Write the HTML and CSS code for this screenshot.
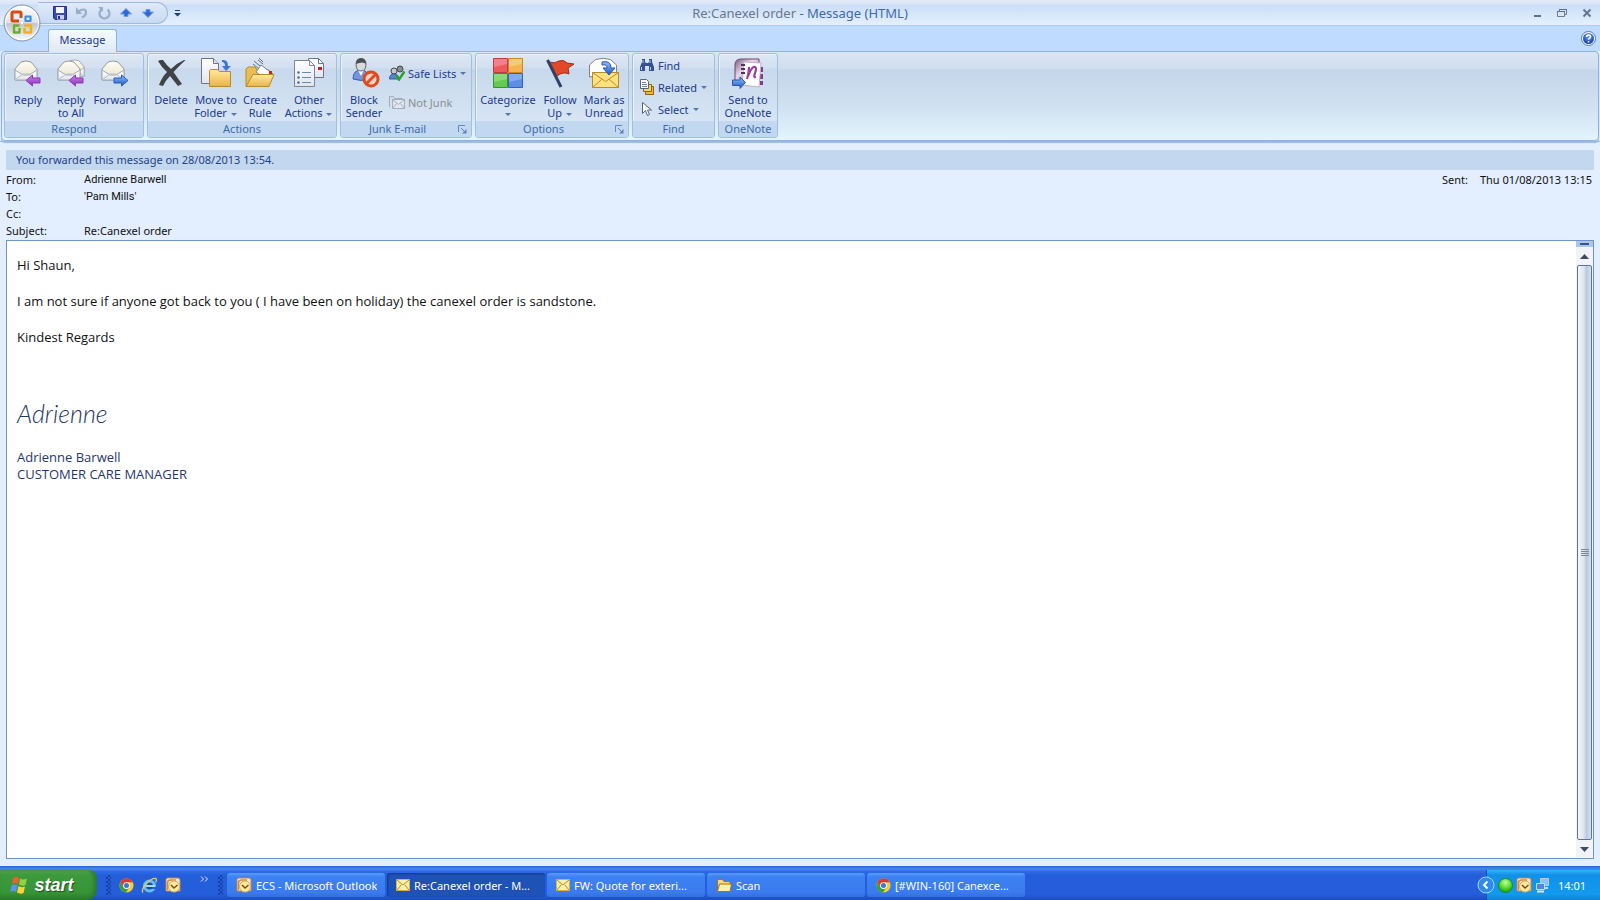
FILE: index.html
```html
<!DOCTYPE html>
<html lang="en">
<head>
  <meta charset="UTF-8">
  <meta name="viewport" content="width=device-width, initial-scale=1.0">
  <title>Re:Canexel order - Message (HTML)</title>
  <link rel="stylesheet" href="styles.css">
</head>
<body>
  <!-- shared icons -->
  <svg class="defs" width="0" height="0" aria-hidden="true">
    <defs>
      <linearGradient id="paper" x1="0" y1="0" x2="0" y2="1"><stop offset="0" stop-color="#fff"/><stop offset="1" stop-color="#dfe5ee"/></linearGradient>
      <linearGradient id="flap" x1="0" y1="0" x2="0" y2="1"><stop offset="0" stop-color="#fffef8"/><stop offset="1" stop-color="#e6dfc8"/></linearGradient>
      <linearGradient id="gold" x1="0" y1="0" x2="0" y2="1"><stop offset="0" stop-color="#ffe9a4"/><stop offset="1" stop-color="#e9b544"/></linearGradient>
      <linearGradient id="blue" x1="0" y1="0" x2="0" y2="1"><stop offset="0" stop-color="#8fc0fa"/><stop offset="1" stop-color="#1e56c8"/></linearGradient>
      <linearGradient id="purple" x1="0" y1="0" x2="0" y2="1"><stop offset="0" stop-color="#cf86e8"/><stop offset="1" stop-color="#8a2bb8"/></linearGradient>
      <linearGradient id="orb" x1="0" y1="0" x2="0" y2="1"><stop offset="0" stop-color="#fff"/><stop offset=".48" stop-color="#dfe3ea"/><stop offset=".52" stop-color="#bfc6d2"/><stop offset="1" stop-color="#fbfcff"/></linearGradient>
      <linearGradient id="onenote" x1="0" y1="0" x2="1" y2="1"><stop offset="0" stop-color="#7a5a80"/><stop offset=".4" stop-color="#e8d8ea"/><stop offset="1" stop-color="#7d4a86"/></linearGradient>
      <radialGradient id="green" cx=".5" cy=".3" r=".7"><stop offset="0" stop-color="#c8ff9a"/><stop offset=".6" stop-color="#4cd62a"/><stop offset="1" stop-color="#1f9a14"/></radialGradient>
      <radialGradient id="help" cx=".5" cy=".3" r=".7"><stop offset="0" stop-color="#6ea4f4"/><stop offset="1" stop-color="#1238a4"/></radialGradient>
    </defs>
    <symbol id="envelope" viewBox="0 0 24 24">
      <path d="M1 9 7 2q5-2 10 0l6 7v11H1z" fill="url(#flap)" stroke="#9b9b96"/>
      <path d="M1 10l8 5h6l8-5v10H1z" fill="url(#paper)" stroke="#a3aab3"/>
      <path d="M1 20l8-6h6l8 6" fill="none" stroke="#b9bfc8"/>
    </symbol>
    <symbol id="arrow" viewBox="0 0 8 5"><path d="M1 1h6L4 4z" fill="#5675a8"/></symbol>
    <symbol id="outlook" viewBox="0 0 16 16">
      <path d="M1 2.500Q1 1 3 1h10q2 0 2 2v11H1z" fill="#fbe9cf" stroke="#b98352"/>
      <path d="M2.500 13V6q0-3 3-3H11" fill="none" stroke="#d58a4a" stroke-width="1.500"/>
      <circle cx="9" cy="9.500" r="5.500" fill="#ffeaa6" stroke="#e0ac48"/>
      <path d="M6 8l3 3 3.500-3" fill="none" stroke="#7a4a10" stroke-width="1.500"/>
    </symbol>
    <symbol id="chrome" viewBox="0 0 16 16">
      <circle cx="8" cy="8" r="7.500" fill="#f6cf2e"/>
      <path d="M1.400 4.500A7.500 7.500 0 0 1 14.700 4.600L8 4.600 5 9.800z" fill="#dc3a2c"/>
      <path d="M1.400 4.500A7.500 7.500 0 0 0 7.500 15.500L11 9.700 5 9.800z" fill="#3a9c46"/>
      <circle cx="8" cy="8" r="3.600" fill="#fff"/><circle cx="8" cy="8" r="2.700" fill="#3c78d8"/>
    </symbol>
    <symbol id="mail" viewBox="0 0 14 14">
      <path d="M.500 1.500h13v11H.500z" fill="#fff0a8" stroke="#d8b04c"/>
      <path d="M1 2l6 5 6-5M1 12l4-5M13 12 9 7" fill="none" stroke="#b08a30"/>
    </symbol>
    <symbol id="launcher" viewBox="0 0 9 9">
      <path d="M.500 7V.500H7" fill="none" stroke="#6486b8"/>
      <path d="M4 8.500h4.500V4z" fill="#5f82b5"/><path d="M3 3l3 3" stroke="#5f82b5"/>
    </symbol>
  </svg>

  <header class="titlebar">
    <button class="office-btn" aria-label="Office Button">
      <svg width="38" height="38" viewBox="0 0 38 38">
        <circle cx="19" cy="19" r="18" fill="url(#orb)" stroke="#8492a8"/>
        <circle cx="19" cy="19" r="16.500" fill="none" stroke="#fff" opacity=".8"/>
        <g fill="none" stroke-width="3" stroke-linejoin="round">
          <path d="M16 17h-6q-1 0-1-1V9q0-1 1-1h7q1 0 1 1v5" stroke="#d84a12"/>
          <path d="M21.500 17h6v-4.500h-5V16" stroke="#3d8fdc" stroke-width="2.200"/>
          <path d="M16.500 21.500H11v7h5.500V24" stroke="#6fae27" stroke-width="2.400"/>
          <path d="M21 21.500h7v7h-6.500V24" stroke="#f2b01e" stroke-width="2.600"/>
        </g>
        <path d="M18 18h2v2h-2z" fill="#fff"/>
      </svg>
    </button>
    <div class="quick-access">
      <button aria-label="Save"><svg width="14" height="14" viewBox="0 0 14 14"><path d="M.500.500h13v13H2L.500 12z" fill="#3c49b0" stroke="#232e86"/><path d="M3 1h8v6H3z" fill="#f4f7ff"/><path d="M4 9h7v4.500H4z" fill="#c8d0e6"/><path d="M5 10h2v3H5z" fill="#232e86"/></svg></button>
      <button aria-label="Undo" disabled><svg width="14" height="14" viewBox="0 0 14 14"><path d="M3 5.500Q11 1 11 6.500q0 3-4 5" fill="none" stroke="#9cadc9" stroke-width="2.200"/><path d="M1 1v7h6z" fill="#9cadc9"/></svg></button>
      <button aria-label="Repeat" disabled><svg width="14" height="14" viewBox="0 0 14 14"><path d="M10.500 3.500a5 5 0 1 1-6 0" fill="none" stroke="#9cadc9" stroke-width="2.200"/><path d="M6 1H1l5 5z" fill="#9cadc9"/></svg></button>
      <button aria-label="Previous Item"><svg width="12" height="10" viewBox="0 0 12 10"><path d="M6 .500 11.500 6H8v2.500H4V6H.500z" fill="#2f66d8" stroke="#6f9cec"/></svg></button>
      <button aria-label="Next Item"><svg width="12" height="10" viewBox="0 0 12 10"><path d="M6 9.500 11.500 4H8V1.500H4V4H.500z" fill="#2f66d8" stroke="#6f9cec"/></svg></button>
    </div>
    <button class="customize" aria-label="Customize Quick Access Toolbar"><svg width="7" height="7" viewBox="0 0 7 7"><path d="M1 0h5v1H1zM0 3h7L3.500 6.500z" fill="#1f3f7c"/></svg></button>
    <h1 class="title"><span>Re:Canexel order</span> - Message (HTML)</h1>
    <div class="window-buttons">
      <button aria-label="Minimize"><svg width="10" height="10" viewBox="0 0 10 10"><path d="M2 7h7v2H2z" fill="#5f6f88"/></svg></button>
      <button aria-label="Restore"><svg width="10" height="10" viewBox="0 0 10 10"><path d="M2.500 3V1.500h7v5H8M.500 3.500h7v5h-7z" fill="none" stroke="#6b7b95"/><path d="M2 1h8v1H2zM0 3h8v1H0z" fill="#5f6f88"/></svg></button>
      <button aria-label="Close"><svg width="10" height="10" viewBox="0 0 10 10"><path d="M1.500 1.500l7 7M8.500 1.500l-7 7" stroke="#66758e" stroke-width="2"/></svg></button>
    </div>
  </header>

  <nav class="tabs">
    <button class="tab">Message</button>
    <button class="help-btn" aria-label="Help"><svg width="15" height="15" viewBox="0 0 15 15"><circle cx="7.500" cy="7.500" r="7" fill="#fff" stroke="#4f74b8"/><circle cx="7.500" cy="7.500" r="5.500" fill="url(#help)"/><path d="M5.500 6q0-2 2-2t2 1.700q0 1-1.900 2.300v.800M7.500 10v1.500" fill="none" stroke="#fff" stroke-width="1.500"/></svg></button>
  </nav>

  <div class="ribbon">
    <section class="group respond">
      <div class="tools">
        <button class="big"><svg width="32" height="32" viewBox="0 0 32 32"><use href="#envelope" x="2" y="3" width="24" height="24"/><path d="M14 23.500 20.500 18v3H28v5h-7.500v3z" fill="url(#purple)" stroke="#8a3ab4"/></svg>Reply</button>
        <button class="big"><svg width="32" height="32" viewBox="0 0 32 32"><use href="#envelope" x="9" y="1" width="21" height="23"/><use href="#envelope" x="2" y="3" width="24" height="24"/><path d="M14 23.500 20.500 18v3H28v5h-7.500v3z" fill="url(#purple)" stroke="#8a3ab4"/></svg>Reply<br>to All</button>
        <button class="big"><svg width="32" height="32" viewBox="0 0 32 32"><use href="#envelope" x="2" y="3" width="24" height="24"/><path d="M29 23.500 22.500 18v3H15v5h7.500v3z" fill="url(#blue)" stroke="#2a58b0"/></svg>Forward</button>
      </div>
      <h2>Respond</h2>
    </section>

    <section class="group actions">
      <div class="tools">
        <button class="big"><svg width="32" height="32" viewBox="0 0 32 32"><path d="M3 4q2-1.500 5-1 4 6 8 9 6-6 13-9h1.500Q24 9 18.500 15q4 6 8.500 12l-4 2q-4-5-8-10-5 5-7 10l-4-1q3-8 8-13Q7 11 3 4z" fill="#3f4246"/></svg>Delete</button>
        <button class="big"><svg width="32" height="32" viewBox="0 0 32 32"><path d="M1.500 1.500h12l5 5v20h-17z" fill="url(#paper)" stroke="#6e7682"/><path d="M13.500 1.500v5h5" fill="#dbe1ea" stroke="#6e7682"/><path d="M9.500 29.500v-16l1-1h7l2 2h11v15z" fill="url(#gold)" stroke="#b88a2d"/><path d="M22 3q6-1 6 6h3l-5 5-4-5h3q0-4-3-4z" fill="#3e74d8"/></svg>Move to<br>Folder <svg class="caret" width="8" height="5"><use href="#arrow"/></svg></button>
        <button class="big"><svg width="32" height="32" viewBox="0 0 32 32"><path d="M2 29V12l2-2h7l2 3h12v6z" fill="#e9bd52" stroke="#b88a2d"/><path d="M17 8l12 9-5 7-12-9z" fill="#fff" stroke="#7d848f"/><path d="M9 7l6 5M10 4l6 5M14 3l5 4M15 1l4 4" stroke="#6a7078"/><path d="M25 14h3v3h-3z" fill="#cc1f1f"/><path d="M2 29.500l7-12h21l-5 12z" fill="url(#gold)" stroke="#b88a2d"/></svg>Create<br>Rule</button>
        <button class="big"><svg width="32" height="32" viewBox="0 0 32 32"><path d="M15.500 8V1.500h10l5 5v14h-15z" fill="url(#paper)" stroke="#6e7682"/><path d="M25.500 1.500v5h5" fill="none" stroke="#6e7682"/><path d="M25 10h4v3h-4z" fill="#cc1f1f"/><path d="M1.500 3.500h15l5 5v21h-20z" fill="url(#paper)" stroke="#7c8592"/><path d="M16.500 3.500v5h5" fill="none" stroke="#7c8592"/><path d="M9 15.500h9M9 20.500h9M9 25.500h9" stroke="#6d87b8"/><circle cx="5.500" cy="15.500" r="1.200" fill="#56657c"/><circle cx="5.500" cy="20.500" r="1.200" fill="#56657c"/><circle cx="5.500" cy="25.500" r="1.200" fill="#56657c"/></svg>Other<br>Actions <svg class="caret" width="8" height="5"><use href="#arrow"/></svg></button>
      </div>
      <h2>Actions</h2>
    </section>

    <section class="group junk">
      <div class="tools">
        <button class="big"><svg width="32" height="32" viewBox="0 0 32 32"><path d="M5 22q0-9 8-9 7 0 8 9-7 3-16 0z" fill="#7195df" stroke="#3a5cac"/><path d="M10 13l3 6 3-6z" fill="#fff"/><path d="M8 7q0-5 5-5t5 5q0 7-5 7t-5-7z" fill="#d8d9dc" stroke="#63676e"/><path d="M8 7q0-6 5-6t5 6q-3-3-10 0z" fill="#4d4f54"/><circle cx="23" cy="22" r="7" fill="#f6d3c6" stroke="#e04a1c" stroke-width="3"/><path d="M18 27l10-10" stroke="#e04a1c" stroke-width="3"/></svg>Block<br>Sender</button>
        <div class="small-col">
          <button class="small"><svg width="16" height="16" viewBox="0 0 16 16"><circle cx="11" cy="4" r="3" fill="#8b8e93" stroke="#44474c"/><circle cx="5" cy="6" r="3" fill="#c5c7ca" stroke="#44474c"/><path d="M.500 14q0-5 4.500-5t5 5z" fill="#5c82d6" stroke="#3759a4"/><path d="M7 10l3 4.500 5.500-8" fill="none" stroke="#2aa12a" stroke-width="2.500"/></svg>Safe Lists <svg class="caret" width="8" height="5"><use href="#arrow"/></svg></button>
          <button class="small" disabled><svg width="16" height="16" viewBox="0 0 16 16"><path d="M.500 13V2.500h4l1 2h8" fill="none" stroke="#a3adbb"/><path d="M3.500 5.500h12v9h-12z" fill="#e2e8f0" stroke="#a3adbb"/><path d="M3.500 5.500l6 5 6-5M3.500 14.500l4-5M15.500 14.500l-4-5" fill="none" stroke="#a3adbb"/></svg>Not Junk</button>
        </div>
      </div>
      <h2>Junk E-mail</h2>
      <button class="launcher" aria-label="Junk E-mail Options"><svg width="9" height="9"><use href="#launcher"/></svg></button>
    </section>

    <section class="group options">
      <div class="tools">
        <button class="big"><svg width="32" height="32" viewBox="0 0 32 32"><path d="M1.500 1.500h14v14h-14z" fill="#ee5a5c" stroke="#bf3c40"/><path d="M16.500 1.500h14v14h-14z" fill="#f5b44e" stroke="#c98628"/><path d="M1.500 16.500h14v14h-14z" fill="#62cb50" stroke="#35952c"/><path d="M16.500 16.500h14v14h-14z" fill="#5c8ee6" stroke="#3562b8"/><path d="M2 2h13v5L2 10zM17 2h13v5l-13 3zM2 17h13v5L2 25zM17 17h13v5l-13 3z" fill="#fff" opacity=".25"/></svg>Categorize<br><svg class="caret" width="8" height="5"><use href="#arrow"/></svg></button>
        <button class="big"><svg width="32" height="32" viewBox="0 0 32 32"><path d="M5 5q6 2 10-1 5-2 8 2l7 1-6 4 1 6q-6-3-12 2z" fill="#e2482a" stroke="#a82a14"/><path d="M3.500 3 17 30" stroke="#2f4168" stroke-width="3"/></svg>Follow<br>Up <svg class="caret" width="8" height="5"><use href="#arrow"/></svg></button>
        <button class="big"><svg width="32" height="32" viewBox="0 0 32 32"><path d="M1.500 20V8l6-5.500q8-2.500 15 0l6 5.500v8z" fill="#fff" stroke="#7d848f"/><path d="M4.500 15.500h26v15h-26z" fill="#ffe27c" stroke="#b88a2d"/><path d="M4.500 15.500l13 9 13-9M4.500 30.500l9-8M30.500 30.500l-9-8" fill="none" stroke="#b88a2d"/><path d="M14 5q9-2 9 6h4l-6 7-6-7h4q0-4-5-3z" fill="url(#blue)" stroke="#2a58b0"/></svg>Mark as<br>Unread</button>
      </div>
      <h2>Options</h2>
      <button class="launcher" aria-label="Message Options"><svg width="9" height="9"><use href="#launcher"/></svg></button>
    </section>

    <section class="group find">
      <div class="tools">
        <div class="small-col">
          <button class="small"><svg width="16" height="16" viewBox="0 0 16 16"><path d="M3 2h3v3l1 1h2l1-1V2h3v3l2 5v4h-5v-5H6v5H1v-4l2-5z" fill="#33518f"/><path d="M4 3v3M2.500 10v3M11 3v3M11.500 10v3" stroke="#b8cdf2"/></svg>Find</button>
          <button class="small"><svg width="16" height="16" viewBox="0 0 16 16"><path d="M6.500 7.500h8v8h-8z" fill="#f2b838" stroke="#8a6314"/><path d="M4.500 5.500h8v7h-8z" fill="#fbd467" stroke="#8a6314"/><path d="M1.500.500h6l2 2v7h-8z" fill="#fff" stroke="#5b6474"/><path d="M3 3.500h4M3 5.500h5M3 7.500h5" stroke="#6d87b8"/></svg>Related <svg class="caret" width="8" height="5"><use href="#arrow"/></svg></button>
          <button class="small"><svg width="16" height="16" viewBox="0 0 16 16"><path d="M3.500 1.500v11l3-3 2 5 2-1-2-4.500h4z" fill="#fff" stroke="#55647e"/></svg>Select <svg class="caret" width="8" height="5"><use href="#arrow"/></svg></button>
        </div>
      </div>
      <h2>Find</h2>
    </section>

    <section class="group onenote">
      <div class="tools">
        <button class="big"><svg width="32" height="32" viewBox="0 0 32 32"><path d="M3 26V8q0-6 6-6h18v24z" fill="url(#onenote)" stroke="#6a4870"/><path d="M28 10h3v5h-3zM28 17h3v5h-3zM28 24h3v4h-3z" fill="#7d3f86"/><path d="M12 5l17 1-2 24-17-2z" fill="#fff" stroke="#c5b0c8"/><path d="M15 22q2-6 2-12M16 19q4-10 7-9 2 1 0 6-2 5 1 4" fill="none" stroke="#9c3fa0" stroke-width="2.200"/><path d="M9 8h4M9 12h4M9 16h4" stroke="#4f3354" stroke-width="2"/><path d="M13.500 25.500 8 20v3H.500v5.500H8v3z" fill="url(#blue)" stroke="#2a58b0"/></svg>Send to<br>OneNote</button>
      </div>
      <h2>OneNote</h2>
    </section>
  </div>

  <main class="message">
    <p class="infobar">You forwarded this message on 28/08/2013 13:54.</p>
    <div class="headers">
      <dl>
        <dt>From:</dt><dd class="person">Adrienne Barwell</dd>
        <dt>To:</dt><dd class="person">'Pam Mills'</dd>
        <dt>Cc:</dt><dd class="person"></dd>
        <dt>Subject:</dt><dd>Re:Canexel order</dd>
      </dl>
      <p class="sent"><span>Sent:</span><time datetime="2013-08-01T13:15">Thu 01/08/2013 13:15</time></p>
    </div>

    <div class="reading-pane">
      <article class="mail-body">
        <p>Hi Shaun,</p>
        <p>I am not sure if anyone got back to you ( I have been on holiday) the canexel order is sandstone.</p>
        <p>Kindest Regards</p>
        <p class="signature">Adrienne</p>
        <p class="sender">Adrienne Barwell<br>CUSTOMER CARE MANAGER</p>
      </article>
      <div class="scrollbar">
        <div class="split"></div>
        <button aria-label="Scroll up"><svg width="9" height="5" viewBox="0 0 9 5"><path d="M0 5h9L4.500 0z" fill="#3d4a66"/></svg></button>
        <div class="thumb"><svg width="8" height="8" viewBox="0 0 8 8"><path d="M0 .500h8M0 2.500h8M0 4.500h8M0 6.500h8" stroke="#7d8796"/></svg></div>
        <button aria-label="Scroll down"><svg width="9" height="5" viewBox="0 0 9 5"><path d="M0 0h9L4.500 5z" fill="#3d4a66"/></svg></button>
      </div>
    </div>
  </main>

  <footer class="taskbar">
    <button class="start">
      <svg width="20" height="20" viewBox="0 0 20 20"><path d="M4 3q3-2 6 0L9 9q-3-2-6 0z" fill="#f0602c"/><path d="M11 3.500q3 2 7 0L16.500 10q-3 1.500-6.500-.500z" fill="#8fd43e"/><path d="M2.500 10.500q3-2 6 0L7 17q-3-2-6 0z" fill="#5b93f0"/><path d="M9.500 11q3 2 6.500.500L14.500 18q-3 1.500-6.500-.500z" fill="#fbd433"/></svg>start
    </button>
    <span class="grip"></span>
    <div class="quick-launch">
      <button aria-label="Google Chrome"><svg width="15" height="15"><use href="#chrome"/></svg></button>
      <button aria-label="Internet Explorer"><svg width="17" height="17" viewBox="0 0 17 17"><circle cx="8.500" cy="9" r="5" fill="#1c4ca8" stroke="#62c0f8" stroke-width="3"/><path d="M5 9h9" stroke="#a8dcff" stroke-width="2"/><path d="M11 11h5" stroke="#245edc" stroke-width="2"/><path d="M2 15.500Q0 13 5 7q6-6 9.500-5.500 2 .500 0 4" fill="none" stroke="#e8c95a" stroke-width="1.300"/></svg></button>
      <button aria-label="Microsoft Outlook"><svg width="16" height="16"><use href="#outlook"/></svg></button>
    </div>
    <button class="more" aria-label="More"><svg width="9" height="6" viewBox="0 0 9 6"><path d="M1 .500 3.500 3 1 5.500M5 .500 7.500 3 5 5.500" fill="none" stroke="#dbe8ff"/></svg></button>
    <span class="grip"></span>
    <div class="tasks">
      <button class="task"><svg width="16" height="16"><use href="#outlook"/></svg><span>ECS - Microsoft Outlook</span></button>
      <button class="task active"><svg width="14" height="14"><use href="#mail"/></svg><span>Re:Canexel order - M...</span></button>
      <button class="task"><svg width="14" height="14"><use href="#mail"/></svg><span>FW: Quote for exteri...</span></button>
      <button class="task"><svg width="16" height="16" viewBox="0 0 16 16"><path d="M1.500 14V2.500h5l1.500 2h6V14z" fill="#f7d978" stroke="#9a7420"/><path d="M1.500 14.500l2-7.500h12l-1.500 7.500z" fill="#ffeeb0" stroke="#9a7420"/></svg><span>Scan</span></button>
      <button class="task"><svg width="15" height="15"><use href="#chrome"/></svg><span>[#WIN-160] Canexce...</span></button>
    </div>
    <div class="tray">
      <button class="tray-toggle" aria-label="Show hidden icons"><svg width="18" height="18" viewBox="0 0 18 18"><circle cx="9" cy="9" r="8" fill="#2d8af0" stroke="#a8d2fa"/><path d="M10.500 5.500 7 9l3.500 3.500" fill="none" stroke="#fff" stroke-width="2"/></svg></button>
      <svg width="15" height="15" viewBox="0 0 15 15"><circle cx="7.500" cy="7.500" r="7" fill="url(#green)" stroke="#1c8a1c"/></svg>
      <svg width="16" height="16"><use href="#outlook"/></svg>
      <svg width="15" height="16" viewBox="0 0 15 16"><path d="M5.500 1.500h8v7h-8z" fill="#8cc0f8" stroke="#b8cce4"/><path d="M8 11h5" stroke="#cdd8e6" stroke-width="2"/><path d="M1.500 6.500h8v6h-8z" fill="#4b86e0" stroke="#c8d8ec"/><path d="M2 14.500h7" stroke="#dce8f4" stroke-width="2"/></svg>
      <time class="clock">14:01</time>
    </div>
  </footer>
</body>
</html>
```
FILE: styles.css
```css
* {
  box-sizing: border-box;
}

body {
  display: flex;
  flex-direction: column;
  min-height: 100vh;
  margin: 0;
  background-color: #e3eefe;
  color: #111;
  font-family: "Noto Sans", "Open Sans", sans-serif;
  font-size: 11px;
  line-height: 13px;
}

h1, h2, p, dl, dd {
  margin: 0;
  font-weight: normal;
}

button {
  display: flex;
  align-items: center;
  justify-content: center;
  padding: 0;
  border: none;
  background: none;
  color: inherit;
  font: inherit;
}

svg {
  flex: none;
}

.defs {
  position: absolute;
}

/* title bar */
.titlebar {
  position: relative;
  display: flex;
  align-items: center;
  height: 26px;
  padding: 1px 0 0 38px;
  background: linear-gradient(#e3ebf6 0, #d9e6f8 4px, #cadef7 5px, #e4effd 24px);
  border-bottom: 1px solid #b0cbee;
}

.office-btn {
  position: absolute;
  top: 4px;
  left: 3px;
  z-index: 2;
}

.quick-access {
  display: flex;
  align-items: center;
  height: 22px;
  padding: 0 8px 0 11px;
  border: 1px solid #9ebae1;
  border-left: none;
  border-radius: 0 11px 11px 0;
  background: linear-gradient(#dfeafa, #c8daf3);
}

.quick-access button {
  width: 22px;
  height: 20px;
}

.customize {
  width: 18px;
  height: 20px;
}

.title {
  position: absolute;
  left: 50%;
  transform: translateX(-50%);
  color: #3e6aaa;
  font-size: 13px;
  line-height: 16px;
  white-space: nowrap;
}

.title span {
  color: #69778c;
}

.window-buttons {
  display: flex;
  gap: 15px;
  margin-left: auto;
  padding-right: 8px;
}

/* tab strip */
.tabs {
  display: flex;
  align-items: flex-end;
  justify-content: space-between;
  height: 25px;
  padding: 0 4px 0 48px;
  background-color: #bfdbff;
}

.tab {
  z-index: 1;
  width: 69px;
  height: 23px;
  margin-bottom: -1px;
  padding-bottom: 3px;
  border: 1px solid #8db2e3;
  border-bottom: none;
  border-radius: 3px 3px 0 0;
  background: linear-gradient(#f5faff, #dfe9f5);
  color: #203a8c;
}

.help-btn {
  align-self: center;
}

/* ribbon */
.ribbon {
  display: flex;
  gap: 3px;
  height: 90px;
  margin: 0 1px;
  padding: 1px 2px 2px;
  border: 1px solid #8db2e3;
  border-radius: 4px;
  background: linear-gradient(#dbe6f4 0, #cfddee 17px, #c5d5ea 18px, #d0e1f1 55px, #e2f5fd 100%);
  box-shadow: 0 2px 1px #9cb9dc;
}

.group {
  display: grid;
  grid-template-rows: 1fr 16px;
  border: 1px solid #a2bfdd;
  border-radius: 3px;
  background: linear-gradient(#dee8f5 0, #d2dfef 14px, #c8d9ed 15px, #dbe8f5 100%);
  box-shadow: inset 1px 1px 0 #e9f1fa;
  color: #203a8c;
}

.group h2 {
  grid-area: 2 / 1;
  border-radius: 0 0 2px 2px;
  background-color: #c1d8f0;
  color: #3e6aaa;
  font-size: 11px;
  line-height: 15px;
  text-align: center;
}

.tools {
  display: grid;
  height: 67px;
  padding-top: 3px;
}

.respond .tools {
  grid-template-columns: 46px 40px 48px;
  padding-right: 4px;
}

.actions .tools {
  grid-template-columns: 46px 44px 44px 54px;
}

.junk .tools {
  grid-template-columns: 46px 84px;
}

.options .tools {
  grid-template-columns: 64px 40px 48px;
}

.junk h2,
.options h2 {
  padding-right: 17px;
}

.find .tools {
  grid-template-columns: 81px;
}

.onenote .tools {
  grid-template-columns: 58px;
}

.big {
  display: block;
  align-self: start;
  white-space: nowrap;
}

.big > svg:first-child {
  display: block;
  margin: 0 auto 4px;
}

.caret {
  vertical-align: middle;
}

.small-col {
  display: flex;
  flex-direction: column;
}

.small {
  flex: none;
  justify-content: flex-start;
  gap: 3px;
  height: 22px;
  white-space: nowrap;
}

.junk .small-col {
  gap: 7px;
  padding: 5px 0 0 2px;
}

.find .tools {
  padding-top: 0;
}

.find .small-col {
  padding-left: 6px;
}

.small:disabled {
  color: #8d8d8d;
}

.launcher {
  grid-area: 2 / 1;
  justify-self: end;
  width: 17px;
}

/* message window */
.message {
  display: flex;
  flex: 1;
  flex-direction: column;
  padding: 8px 6px 7px;
  border-top: 1px solid #9cb9dc;
}

.infobar {
  padding: 0 10px;
  background-color: #c3d8ee;
  color: #1e4287;
  line-height: 20px;
}

.headers {
  display: flex;
  justify-content: space-between;
  padding: 1px 2px 1px 0;
  line-height: 17px;
}

.headers dl {
  display: grid;
  grid-template-columns: 78px auto;
  grid-auto-rows: 17px;
}

.headers .person {
  font-family: "Roboto", "Noto Sans", sans-serif;
}

.sent {
  display: flex;
  gap: 12px;
}

.reading-pane {
  display: flex;
  flex: 1;
  border: 1px solid #6f94c8;
  background-color: #fff;
}

.mail-body {
  flex: 1;
  padding: 15px 10px;
  font-family: "Open Sans", "Noto Sans", sans-serif;
  font-size: 13px;
  line-height: 18px;
}

.mail-body p {
  margin-bottom: 18px;
}

.mail-body .signature {
  margin: 52px 0 21px;
  color: #1f3864;
  font-family: "Lato", cursive;
  font-size: 25px;
  font-style: italic;
  font-weight: 300;
  line-height: 30px;
}

.mail-body .sender {
  color: #1f3870;
  line-height: 17px;
}

.scrollbar {
  display: flex;
  flex-direction: column;
  width: 17px;
  background-color: #f1f3f7;
}

.scrollbar button {
  height: 18px;
}

.split {
  height: 6px;
  border: solid #a9c6ee;
  border-width: 2px 4px;
  background-color: #3d5280;
}

.thumb {
  display: flex;
  flex: 1;
  align-items: center;
  justify-content: center;
  margin: 0 1px;
  border: 1px solid #62709a;
  border-radius: 2px;
  background: linear-gradient(90deg, #f4f6f9, #dfe4ea 45%, #b5cbe0 65%, #d3e1f0);
}

/* taskbar */
.taskbar {
  display: flex;
  align-items: center;
  height: 34px;
  padding-top: 4px;
  background: linear-gradient(#2a63cf 0, #3f8cf0 3px, #2e6fe4 5px, #245edb 9px, #245edb 28px, #1d4dbd 100%);
  color: #fff;
}

.start {
  gap: 5px;
  align-self: stretch;
  width: 97px;
  padding-right: 14px;
  border-radius: 0 8px 10px 0;
  background: linear-gradient(#5cab58 0, #3c9a3c 5px, #379537 22px, #2a7d2c 100%);
  box-shadow: inset -3px 0 4px #2c7530;
  font-family: "Liberation Sans", Arial, sans-serif;
  font-size: 18px;
  font-style: italic;
  font-weight: bold;
  text-shadow: 1px 1px 1px #1d4f1d;
}

.grip {
  width: 5px;
  height: 20px;
  margin-left: 9px;
  background: repeating-conic-gradient(#173f9e 0 25%, transparent 0 50%) 0 0 / 4px 4px;
}

.quick-launch {
  display: flex;
  gap: 7px;
  margin-left: 8px;
}

.more {
  align-self: flex-start;
  margin: 6px 0 0 19px;
}

.tasks {
  display: flex;
  flex: 1;
  gap: 2px;
  min-width: 0;
  margin-left: 4px;
}

.task {
  flex: 0 1 158px;
  gap: 4px;
  justify-content: flex-start;
  min-width: 0;
  height: 24px;
  padding-left: 9px;
  border-radius: 3px;
  background: linear-gradient(#5a9bfa, #3c81f3 4px, #3a7bee 80%, #3470e0);
  white-space: nowrap;
}

.task span {
  overflow: hidden;
}

.task.active {
  background: #1e52b7;
  box-shadow: inset 1px 1px 2px #123a88;
}

.tray {
  display: flex;
  align-items: center;
  gap: 3px;
  align-self: stretch;
  padding-right: 14px;
  border-left: 1px solid #0f55b4;
  background: linear-gradient(#35b3f5 0, #1290e8 5px, #129aef 24px, #1180d8 100%);
}

.tray-toggle {
  margin-left: -10px;
}

.clock {
  margin-left: 5px;
}
```
